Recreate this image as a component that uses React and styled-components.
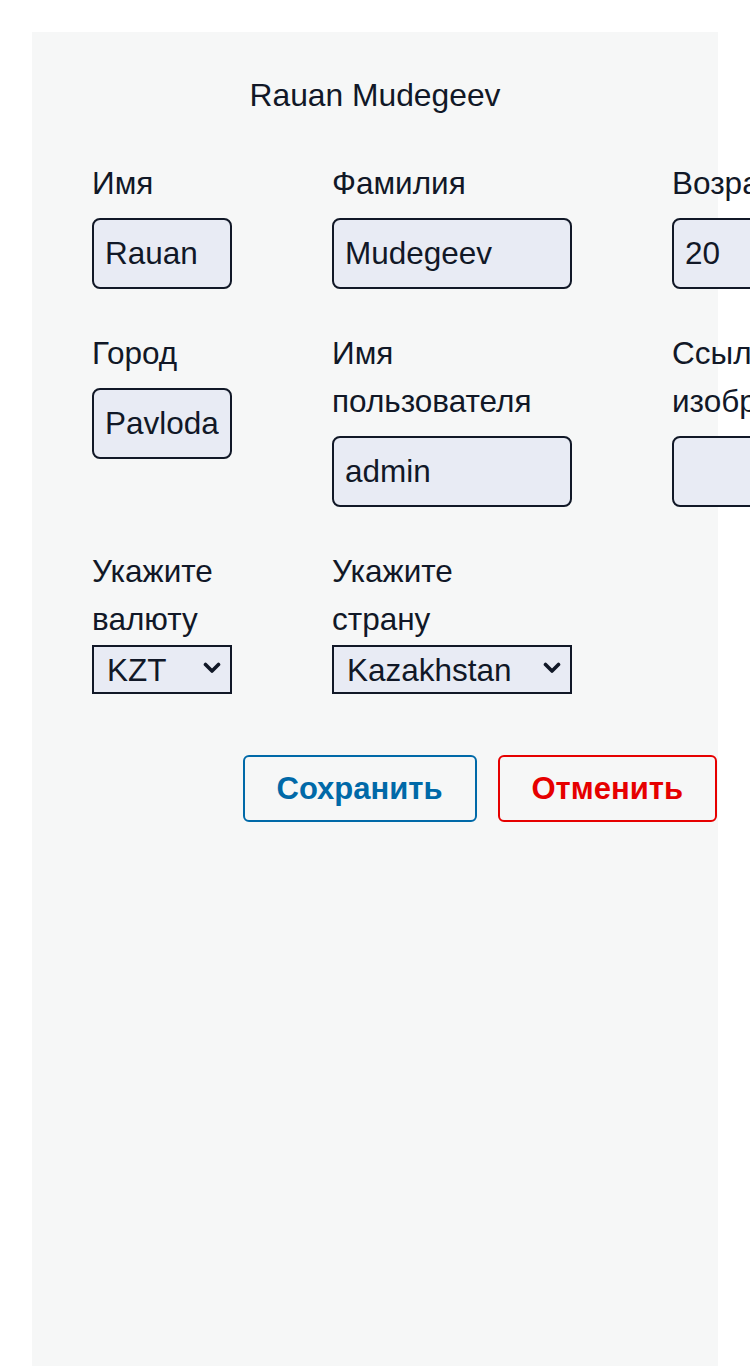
import React from 'react';
import styled, { createGlobalStyle } from 'styled-components';

const textColor = '#111827';
const fieldBg = '#e8ebf4';

const Global = createGlobalStyle`
  html, body {
    margin: 0;
    overflow-x: hidden;
  }
  body {
    padding: 32px 32px 0;
    background: #ffffff;
    font-family: "Liberation Sans", Arial, sans-serif;
    color: ${textColor};
  }
`;

const Panel = styled.div`
  box-sizing: border-box;
  width: 686px;
  min-height: calc(100vh - 32px);
  background: #f6f7f7;
  padding: 45px 0 0 60px;
`;

const Title = styled.div`
  font-size: 31.8px;
  line-height: 36px;
  text-align: center;
  margin-left: -60px;
`;

const Form = styled.div`
  display: grid;
  grid-template-columns: 140px 240px 240px;
  column-gap: 100px;
  row-gap: 40px;
  align-items: start;
  margin-top: 46px;
`;

const Field = styled.div`
  display: flex;
  flex-direction: column;
`;

const Label = styled.label`
  font-size: 31.5px;
  line-height: 48px;
`;

const Input = styled.input`
  box-sizing: border-box;
  width: 100%;
  height: 71px;
  margin-top: 11px;
  padding: 0 11px;
  border: 2px solid ${textColor};
  border-radius: 8px;
  background: ${fieldBg};
  color: ${textColor};
  font-family: inherit;
  font-size: 31.5px;
  outline: none;
`;

const SelectWrap = styled.div`
  position: relative;
  margin-top: 2px;
  svg {
    position: absolute;
    right: 11px;
    top: 17px;
    pointer-events: none;
  }
`;

const Select = styled.select`
  box-sizing: border-box;
  width: 100%;
  height: 49px;
  padding: 0 36px 0 13px;
  border: 2px solid ${textColor};
  border-radius: 0;
  background: ${fieldBg};
  color: ${textColor};
  font-family: inherit;
  font-size: 31.5px;
  appearance: none;
  -webkit-appearance: none;
`;

const Actions = styled.div`
  display: flex;
  justify-content: flex-end;
  gap: 21px;
  margin-top: 61px;
  padding-right: 1px;
`;

const Button = styled.button`
  box-sizing: border-box;
  height: 67px;
  padding: 0 32px;
  background: transparent;
  border: 2px solid ${p => p.$color};
  border-radius: 6px;
  color: ${p => p.$color};
  font-family: inherit;
  font-size: 31px;
  font-weight: bold;
  cursor: pointer;
`;

const Chevron = () => (
  <svg width="18" height="12" viewBox="0 0 18 12">
    <path d="M2.5 2.5 L9 9 L15.5 2.5" fill="none" stroke={textColor} strokeWidth="3.6" strokeLinecap="round" strokeLinejoin="round" />
  </svg>
);

const Dropdown = ({ value, options }) => (
  <SelectWrap>
    <Select defaultValue={value}>
      {options.map(o => <option key={o}>{o}</option>)}
    </Select>
    <Chevron />
  </SelectWrap>
);

const App = () => {
  return (
    <Panel>
      <Global />
      <Title>Rauan Mudegeev</Title>
      <Form>
        <Field>
          <Label>Имя</Label>
          <Input defaultValue="Rauan" />
        </Field>
        <Field>
          <Label>Фамилия</Label>
          <Input defaultValue="Mudegeev" />
        </Field>
        <Field>
          <Label>Возраст</Label>
          <Input defaultValue="20" />
        </Field>

        <Field>
          <Label>Город</Label>
          <Input defaultValue="Pavlodar" />
        </Field>
        <Field>
          <Label>Имя пользователя</Label>
          <Input defaultValue="admin" />
        </Field>
        <Field>
          <Label>Ссылка на изображение</Label>
          <Input defaultValue="" />
        </Field>

        <Field>
          <Label>Укажите<br />валюту</Label>
          <Dropdown value="KZT" options={['KZT', 'USD', 'RUB']} />
        </Field>
        <Field>
          <Label>Укажите<br />страну</Label>
          <Dropdown value="Kazakhstan" options={['Kazakhstan', 'Russia']} />
        </Field>
      </Form>
      <Actions>
        <Button $color="#0069a8">Сохранить</Button>
        <Button $color="#e60000">Отменить</Button>
      </Actions>
    </Panel>
  );
};

export default App;
